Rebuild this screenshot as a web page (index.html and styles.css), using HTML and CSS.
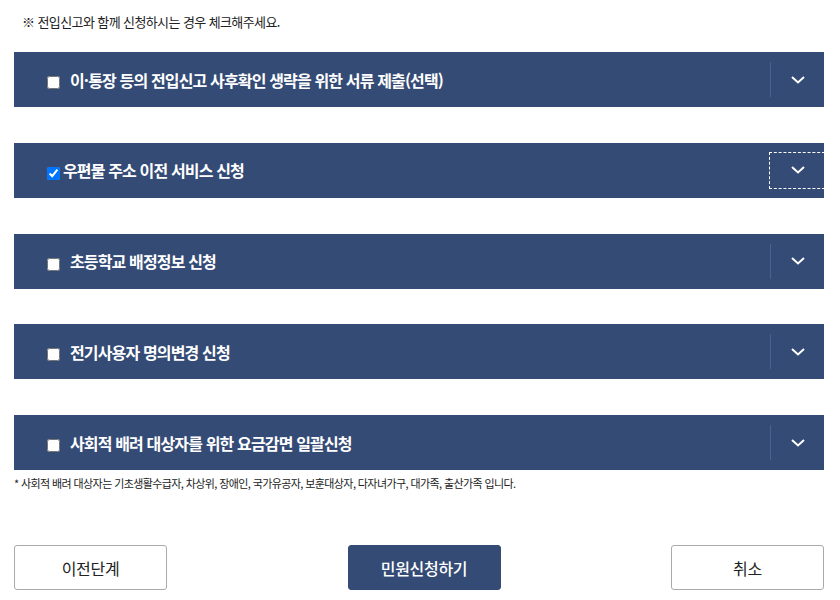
FILE: index.html
```html
<!DOCTYPE html>
<html lang="ko">
<head>
    <meta charset="UTF-8">
    <meta name="viewport" content="width=device-width, initial-scale=1.0">
    <title>민원신청</title>
    <link rel="stylesheet" href="styles.css">
</head>
<body>
    <div class="container">
        <p class="notice">※ 전입신고와 함께 신청하시는 경우 체크해주세요.</p>

        <div class="svc-list">
            <div class="svc-item">
                <div class="svc-head">
                    <input type="checkbox" id="svc1">
                    <label class="svc-title" for="svc1">이·통장 등의 전입신고 사후확인 생략을 위한 서류 제출(선택)</label>
                    <button class="svc-toggle" type="button"><svg width="14" height="8" viewBox="0 0 14 8"><path d="M1 1l6 5.5L13 1" fill="none" stroke="#fff" stroke-width="2"/></svg></button>
                </div>
            </div>
            <div class="svc-item">
                <div class="svc-head">
                    <input type="checkbox" id="svc2" checked>
                    <label class="svc-title tight" for="svc2">우편물 주소 이전 서비스 신청</label>
                    <button class="svc-toggle focused" type="button"><svg width="14" height="8" viewBox="0 0 14 8"><path d="M1 1l6 5.5L13 1" fill="none" stroke="#fff" stroke-width="2"/></svg></button>
                </div>
            </div>
            <div class="svc-item">
                <div class="svc-head">
                    <input type="checkbox" id="svc3">
                    <label class="svc-title" for="svc3">초등학교 배정정보 신청</label>
                    <button class="svc-toggle" type="button"><svg width="14" height="8" viewBox="0 0 14 8"><path d="M1 1l6 5.5L13 1" fill="none" stroke="#fff" stroke-width="2"/></svg></button>
                </div>
            </div>
            <div class="svc-item">
                <div class="svc-head">
                    <input type="checkbox" id="svc4">
                    <label class="svc-title" for="svc4">전기사용자 명의변경 신청</label>
                    <button class="svc-toggle" type="button"><svg width="14" height="8" viewBox="0 0 14 8"><path d="M1 1l6 5.5L13 1" fill="none" stroke="#fff" stroke-width="2"/></svg></button>
                </div>
            </div>
            <div class="svc-item">
                <div class="svc-head">
                    <input type="checkbox" id="svc5">
                    <label class="svc-title" for="svc5">사회적 배려 대상자를 위한 요금감면 일괄신청</label>
                    <button class="svc-toggle" type="button"><svg width="14" height="8" viewBox="0 0 14 8"><path d="M1 1l6 5.5L13 1" fill="none" stroke="#fff" stroke-width="2"/></svg></button>
                </div>
                <p class="footnote">* 사회적 배려 대상자는 기초생활수급자, 차상위, 장애인, 국가유공자, 보훈대상자, 다자녀가구, 대가족, 출산가족 입니다.</p>
            </div>
        </div>

        <div class="actions">
            <button class="btn" type="button">이전단계</button>
            <button class="btn btn-primary" type="button">민원신청하기</button>
            <button class="btn" type="button">취소</button>
        </div>
    </div>
</body>
</html>
```

FILE: styles.css
```css
body { margin: 0; font-family: "Noto Sans CJK KR", "Noto Sans", sans-serif; color: #222; background: #fff; }
.container { width: 810px; margin-left: 14px; }
.notice { margin: 0; padding: 13px 0 0 8px; height: 52px; box-sizing: border-box; font-size: 13px; letter-spacing: -0.6px; line-height: 18px; color: #222; }
.svc-list { display: flex; flex-direction: column; gap: 35.75px; }
.svc-head { display: flex; align-items: center; height: 55px; padding-left: 29px; background: #344b76; color: #fff; overflow: hidden; }
.svc-head input { width: 13px; height: 13px; margin: 6px 3px 0 4px; }
.svc-title { flex: 1; padding-left: 7px; font-size: 16px; font-weight: bold; letter-spacing: -0.85px; line-height: 20px; }
.svc-title.tight { padding-left: 0; }
.svc-toggle { display: flex; align-items: center; justify-content: center; width: 54px; height: 35px; padding: 0; border: none; border-left: 1px solid #4b6290; background: transparent; cursor: pointer; }
.svc-toggle.focused { border-left-color: transparent; outline: 1px dashed #fff; }
.footnote { margin: 0; padding-top: 5px; font-size: 11px; letter-spacing: -0.6px; line-height: 16px; color: #222; }
.actions { display: flex; justify-content: space-between; margin-top: 54px; }
.btn { width: 153px; height: 45px; font-family: "Noto Sans CJK KR", "Noto Sans", sans-serif; font-size: 16px; letter-spacing: -0.3px; color: #222; background: #fff; border: 1px solid #aaa; border-radius: 3px; cursor: pointer; }
.btn-primary { margin-left: 10px; color: #fff; background: #344b76; border-color: #344b76; font-weight: 500; }
```
